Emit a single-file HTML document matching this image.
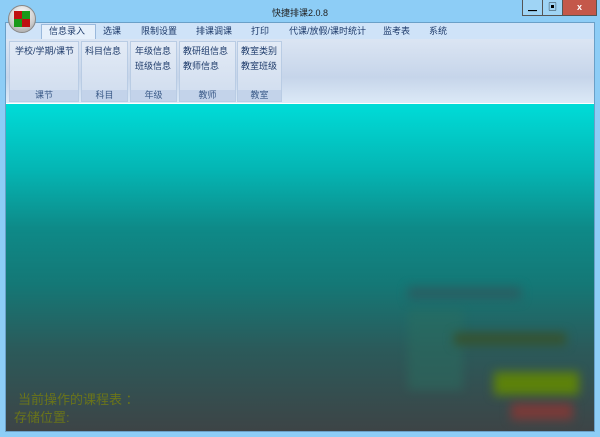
<!DOCTYPE html>
<html><head><meta charset="utf-8"><style>
*{margin:0;padding:0;box-sizing:border-box}
body{width:600px;height:437px;overflow:hidden;background:#8dcdf6;font-family:"Liberation Sans","Noto Sans CJK SC",sans-serif;position:relative}
.title{position:absolute;top:6px;left:0;width:600px;text-align:center;font-size:9px;color:#222}
.btns{position:absolute;top:0;left:522px;height:16px;display:flex;border:1px solid #555;border-top:none}
.btns div{height:15px;font-size:9px;text-align:center;line-height:15px;color:#000}
.logo{position:absolute;left:8px;top:5px;width:28px;height:28px;border-radius:50%;background:radial-gradient(circle at 50% 30%,#fff,#ccc 60%,#999);border:1px solid #888}
.logo i{position:absolute;left:5px;top:5px;width:16px;height:16px;background:conic-gradient(#1a9a1a 0 25%,#c01010 0 50%,#1a9a1a 0 75%,#c01010 0)}
.client{position:absolute;left:5px;top:22px;width:590px;height:410px;background:#d9e8f8;border:1px solid #6aa0c8}
.tabs{position:absolute;left:0;top:0;width:588px;height:16px;background:#cfe3f8}
.tab{position:absolute;top:1px;font-size:9px;line-height:14px;color:#1d3a6a}
.tabsel{position:absolute;left:35px;top:1px;width:55px;height:16px;background:#e6f0fb;border:1px solid #9ab9dc;border-bottom:none}
.ribbon{position:absolute;left:0;top:16px;width:588px;height:64px;background:linear-gradient(#dbe5f3,#c6d5ea 60%,#dce9f7)}
.grp{position:absolute;top:2px;height:61px;border:1px solid #b9cce4;background:linear-gradient(#e3ebf6,#cfdcee);font-size:9px;line-height:11px;color:#1d3a6a}
.grp .lab{position:absolute;bottom:0;left:0;right:0;height:11px;background:#c3d3ea;text-align:center;line-height:11px;color:#3a5a88}
.grp p{position:absolute;white-space:nowrap}
.main{position:absolute;left:0;top:80px;width:588px;height:328px;background:linear-gradient(#00dcd8 0%,#04b6b4 20%,#0e8a88 38%,#147876 55%,#2b5a5a 75%,#3d4446 100%);overflow:hidden;border-top:1px solid #fff}
.bl{position:absolute;filter:blur(5px)}
.txt{position:absolute;font-size:13px;color:#6a741a}
</style></head><body>
<div class="title">快捷排课2.0.8</div>
<div class="btns"><div style="width:20px;background:#9fd4f5;border-right:1px solid #555">▁</div><div style="width:20px;background:#9fd4f5;border-right:1px solid #555">▣</div><div style="width:33px;background:#c4584a;color:#fff;font-weight:bold">x</div></div>
<div class="client">
<div class="tabs">
<div class="tabsel"></div>
<span class="tab" style="left:43px">信息录入</span>
<span class="tab" style="left:97px">选课</span>
<span class="tab" style="left:135px">限制设置</span>
<span class="tab" style="left:190px">排课调课</span>
<span class="tab" style="left:245px">打印</span>
<span class="tab" style="left:283px">代课/放假/课时统计</span>
<span class="tab" style="left:377px">监考表</span>
<span class="tab" style="left:423px">系统</span>
</div>
<div class="ribbon">
<div class="grp" style="left:3px;width:70px"><p style="left:5px;top:4px">学校/学期/课节</p><div class="lab">课节</div></div>
<div class="grp" style="left:75px;width:47px"><p style="left:3px;top:4px">科目信息</p><div class="lab">科目</div></div>
<div class="grp" style="left:124px;width:47px"><p style="left:4px;top:4px">年级信息</p><p style="left:4px;top:19px">班级信息</p><div class="lab">年级</div></div>
<div class="grp" style="left:173px;width:57px"><p style="left:3px;top:4px">教研组信息</p><p style="left:3px;top:19px">教师信息</p><div class="lab">教师</div></div>
<div class="grp" style="left:231px;width:45px"><p style="left:3px;top:4px">教室类别</p><p style="left:3px;top:19px">教室班级</p><div class="lab">教室</div></div>
</div>
<div class="main">
<div class="bl" style="left:402px;top:183px;width:113px;height:13px;background:#285f63"></div>
<div class="bl" style="left:402px;top:206px;width:55px;height:80px;background:#2a6e60;opacity:.5"></div>
<div class="bl" style="left:448px;top:229px;width:112px;height:12px;background:#36522e"></div>
<div class="bl" style="left:488px;top:268px;width:85px;height:23px;background:#5d820a"></div>
<div class="bl" style="left:505px;top:299px;width:62px;height:17px;background:#7a3a38"></div>
<div class="txt" style="left:12px;top:285px">当前操作的课程表 ：</div>
<div class="txt" style="left:8px;top:303px">存储位置:</div>
</div>
</div>
<div class="logo"><i></i></div>
</body></html>
